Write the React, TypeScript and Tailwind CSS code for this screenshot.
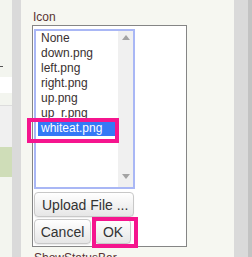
import { useState } from "react";

const icons = ["None", "down.png", "left.png", "right.png", "up.png", "up_r.png", "whiteat.png"];

function Dotted({ className }: { className: string }) {
  return (
    <div
      className={`${className} bg-[#dadada] bg-[radial-gradient(#c4c4c4_0.6px,transparent_0.7px)] bg-[length:2px_2px]`}
    />
  );
}

function Btn({ children, className = "" }: { children: React.ReactNode; className?: string }) {
  return (
    <button
      className={`h-[25px] rounded-[4px] border border-[#c8c8c8] bg-gradient-to-b from-white to-[#e6e6e6] text-[14px] leading-none text-[#333] shadow-[0_1px_1px_rgba(0,0,0,0.08)] ${className}`}
    >
      {children}
    </button>
  );
}

export default function App() {
  const [selected] = useState("whiteat.png");

  return (
    <div className="relative flex h-[257px] w-[252px] overflow-hidden font-['Liberation_Sans',Arial,sans-serif]">
      {/* side panel remains */}
      <div className="flex w-[12px] flex-col bg-[#f3f5ef]">
        <div className="h-[66px]" />
        <div className="h-[1px] w-[3px] bg-[#555]" />
        <div className="mt-[10px] h-[16px] bg-white" />
        <div className="h-[12px]" />
        <div className="h-[1px] bg-[#ddd]" />
        <div className="h-[41px] bg-[#f0f0f0]" />
        <div className="h-[30px] bg-[#cfddb8]" />
      </div>
      <Dotted className="w-[9px]" />

      {/* properties column */}
      <div className="flex flex-1 flex-col bg-[#f6f7f1] pl-[11px] pt-[10px]">
        <div className="ml-[1px] h-[14px] text-[12px] leading-[14px] text-[#5a3434]">Icon</div>
        <div className="mt-[1px] flex h-[222px] w-[155px] shrink-0 flex-col border border-[#858585] bg-white pl-[1px] pt-[3px]">
          <div className="flex h-[160px] w-[101px] border-2 border-[#a9b7f5] bg-white">
            <div className="flex-1 pl-[2px]">
              {icons.map((name) => (
                <div
                  key={name}
                  className={`h-[15px] px-[3px] text-[12px] leading-[15px] whitespace-nowrap ${
                    name === selected ? "bg-[#3479f6] text-white" : "text-[#3a3030]"
                  }`}
                >
                  {name}
                </div>
              ))}
            </div>
            <div className="flex w-[15px] flex-col items-center justify-between bg-[#f0f0f0] pb-[8px] pt-[4px]">
              <svg width="8" height="5" viewBox="0 0 8 5">
                <path d="M4 0 L8 5 L0 5 Z" fill="#a3a3a3" />
              </svg>
              <svg width="8" height="5" viewBox="0 0 8 5">
                <path d="M0 0 L8 0 L4 5 Z" fill="#a3a3a3" />
              </svg>
            </div>
          </div>
          <Btn className="mt-[3px] w-[100px] text-left pl-[7px]">Upload File ...</Btn>
          <div className="mt-[2px] flex gap-[4px]">
            <Btn className="w-[57px]">Cancel</Btn>
            <Btn className="w-[36px]">OK</Btn>
          </div>
        </div>
        <div className="ml-[2px] mt-[4px] text-[12px] leading-[14px] text-[#5a3434]">ShowStatusBar</div>
      </div>

      <Dotted className="w-[14px]" />
      <div className="w-[4px] bg-[#c3c3c3]" />

      {/* annotation highlights */}
      <div className="absolute left-[27px] top-[118px] h-[25px] w-[92px] border-4 border-[#f5158e]" />
      <div className="absolute left-[92px] top-[217px] h-[31px] w-[46px] border-4 border-[#f5158e]" />
    </div>
  );
}
